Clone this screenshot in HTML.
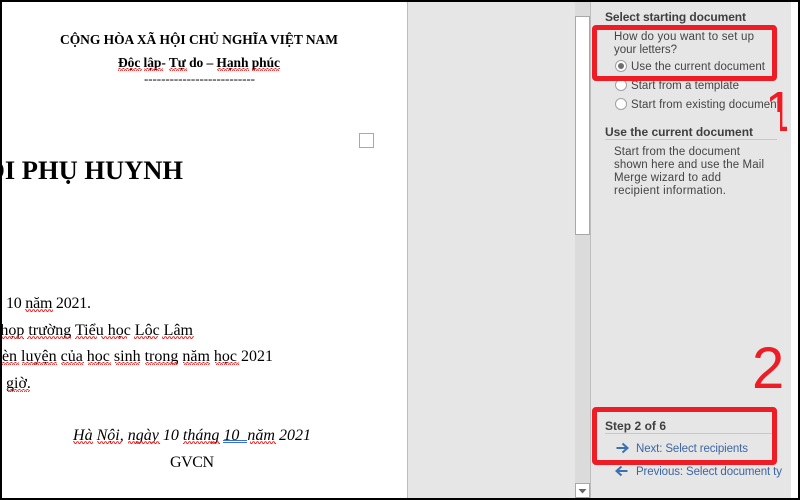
<!DOCTYPE html>
<html lang="vi">
<head>
<meta charset="utf-8">
<title>Mail Merge</title>
<style>
html,body{margin:0;padding:0;background:#000;width:800px;height:500px;overflow:hidden}
svg{display:block}
.d{font-family:"Liberation Serif","Noto Serif CJK SC",serif;fill:#000}
.u{font-family:"Liberation Sans","DejaVu Sans",sans-serif;font-size:11.5px;fill:#444}
.h{font-weight:bold;font-size:12px;fill:#3f3f3f}
.l{fill:#3c66a3}
</style>
</head>
<body>
<svg width="800" height="500" viewBox="0 0 800 500" xmlns="http://www.w3.org/2000/svg">
<defs>
<pattern id="z" patternUnits="userSpaceOnUse" width="4" height="3">
<path d="M0 2.5L1 .7L2 .7L3 2.5L4 2.5" fill="none" stroke="#e22" stroke-width=".9"/>
</pattern>
<clipPath id="pg"><rect x="2" y="2" width="405" height="496"/></clipPath>
<clipPath id="one"><polygon points="770,85 787,85 787,132 780,132 780,112 770,112"/></clipPath>
</defs>

<rect x="0" y="0" width="800" height="500" fill="#000"/>
<rect x="2" y="2" width="405" height="496" fill="#fff"/>
<rect x="407" y="2" width="1" height="496" fill="#bdbdbd"/>
<rect x="408" y="2" width="383" height="496" fill="#e6e6e6"/>
<rect x="791" y="2" width="7" height="496" fill="#fff"/>

<!-- scrollbar -->
<rect x="575" y="2" width="15" height="496" fill="#dbdbdb"/>
<rect x="590" y="2" width="1" height="496" fill="#bdbdbd"/>
<rect x="575.5" y="16.5" width="14" height="218" fill="#fff" stroke="#a8a8a8"/>
<rect x="575.5" y="483.5" width="14" height="14" fill="#fff" stroke="#a8a8a8"/>
<path d="M578.5 489H586.5L582.5 493.5Z" fill="#666"/>

<!-- document -->
<g clip-path="url(#pg)">
<text class="d" x="60" y="44" font-size="13.5" font-weight="bold" textLength="278">CỘNG HÒA XÃ HỘI CHỦ NGHĨA VIỆT NAM</text>
<text class="d" x="118" y="67" font-size="13.5" font-weight="bold" textLength="162">Độc lập- Tự do – Hạnh phúc</text>
<text class="d" x="144" y="83" font-size="13" textLength="111">--------------------------</text>
<text class="d" x="183" y="179" font-size="26.5" font-weight="bold" text-anchor="end">ỘI PHỤ HUYNH</text>
<text class="d" x="6" y="308" font-size="16" textLength="85">10 năm 2021.</text>
<text class="d" x="193" y="335" font-size="16" text-anchor="end">họp trường Tiểu học Lộc Lâm</text>
<text class="d" x="273" y="361" font-size="16" text-anchor="end">rèn luyện của học sinh trong năm học 2021</text>
<text class="d" x="6" y="388" font-size="16">giờ.</text>
<text class="d" x="73" y="440" font-size="16" font-style="italic" textLength="238">Hà Nội, ngày 10 tháng 10&#160; năm 2021</text>
<text class="d" x="170" y="467" font-size="16" textLength="44">GVCN</text>

<!-- spelling squiggles -->
<g fill="url(#z)">
<rect x="118" y="68" width="24" height="3"/><rect x="144" y="68" width="19" height="3"/>
<rect x="169" y="68" width="18" height="3"/><rect x="217" y="68" width="32" height="3"/>
<rect x="252" y="68" width="28" height="3"/>
<rect x="25" y="309" width="28" height="3"/>
<rect x="2" y="336" width="22" height="3"/><rect x="27" y="336" width="44" height="3"/>
<rect x="75" y="336" width="22" height="3"/><rect x="101" y="336" width="26" height="3"/>
<rect x="134" y="336" width="24" height="3"/><rect x="162" y="336" width="32" height="3"/>
<rect x="2" y="362" width="17" height="3"/><rect x="22" y="362" width="35" height="3"/>
<rect x="61" y="362" width="23" height="3"/><rect x="88" y="362" width="23" height="3"/>
<rect x="115" y="362" width="25" height="3"/><rect x="145" y="362" width="33" height="3"/>
<rect x="183" y="362" width="27" height="3"/><rect x="215" y="362" width="24" height="3"/>
<rect x="7" y="389" width="23" height="3"/>
<rect x="73" y="441" width="20" height="3"/><rect x="97" y="441" width="25" height="3"/>
<rect x="128" y="441" width="32" height="3"/><rect x="183" y="441" width="37" height="3"/>
<rect x="250" y="441" width="26" height="3"/>
</g>
<rect x="223" y="440" width="24" height="1" fill="#3a6fd8"/>
<rect x="223" y="442" width="24" height="1" fill="#3a6fd8"/>
<rect x="359.5" y="133.5" width="14" height="14" fill="#fff" stroke="#a8a8a8"/>
</g>

<!-- task pane -->
<text class="u h" x="605" y="21" textLength="141">Select starting document</text>
<text class="u" x="614" y="40" textLength="140">How do you want to set up</text>
<text class="u" x="614" y="53" textLength="63">your letters?</text>
<text class="u" x="631" y="70" textLength="134">Use the current document</text>
<text class="u" x="631" y="89" textLength="108">Start from a template</text>
<text class="u" x="631" y="108" textLength="149">Start from existing document</text>

<circle cx="621" cy="66" r="5.5" fill="#fff" stroke="#a0a0a0"/>
<circle cx="621" cy="66" r="3" fill="#6e6e6e"/>
<circle cx="621" cy="85" r="5.5" fill="#fff" stroke="#a0a0a0"/>
<circle cx="621" cy="104" r="5.5" fill="#fff" stroke="#a0a0a0"/>

<text class="u h" x="605" y="136" textLength="148">Use the current document</text>
<rect x="605" y="139" width="172" height="1" fill="#c8c8c8"/>
<text class="u" x="614" y="155" textLength="126">Start from the document</text>
<text class="u" x="614" y="168" textLength="150">shown here and use the Mail</text>
<text class="u" x="614" y="181" textLength="107">Merge wizard to add</text>
<text class="u" x="614" y="194" textLength="112">recipient information.</text>

<text class="u h" x="605" y="430" textLength="61">Step 2 of 6</text>
<rect x="605" y="433" width="172" height="1" fill="#c8c8c8"/>
<text class="u l" x="636" y="452" textLength="112">Next: Select recipients</text>
<text class="u l" x="636" y="475" textLength="146">Previous: Select document ty</text>
<path d="M616.5 448H627M622.5 443.5L627.5 448L622.5 452.5" fill="none" stroke="#3c70b0" stroke-width="2"/>
<path d="M627.5 471H617M621.5 466.5L616.5 471L621.5 475.5" fill="none" stroke="#3c70b0" stroke-width="2"/>

<!-- annotations -->
<rect x="594.5" y="27.5" width="180" height="51" rx="1.5" fill="none" stroke="#ee1c25" stroke-width="5"/>
<rect x="594.5" y="409.5" width="180" height="53" rx="1.5" fill="none" stroke="#ee1c25" stroke-width="5"/>
<text x="752" y="388" font-family="'Liberation Sans',sans-serif" font-size="58" fill="#ee1c25">2</text>
<text x="763" y="131" font-family="'Liberation Sans',sans-serif" font-size="57" fill="#ee1c25" clip-path="url(#one)">1</text>
</svg>
</body>
</html>
